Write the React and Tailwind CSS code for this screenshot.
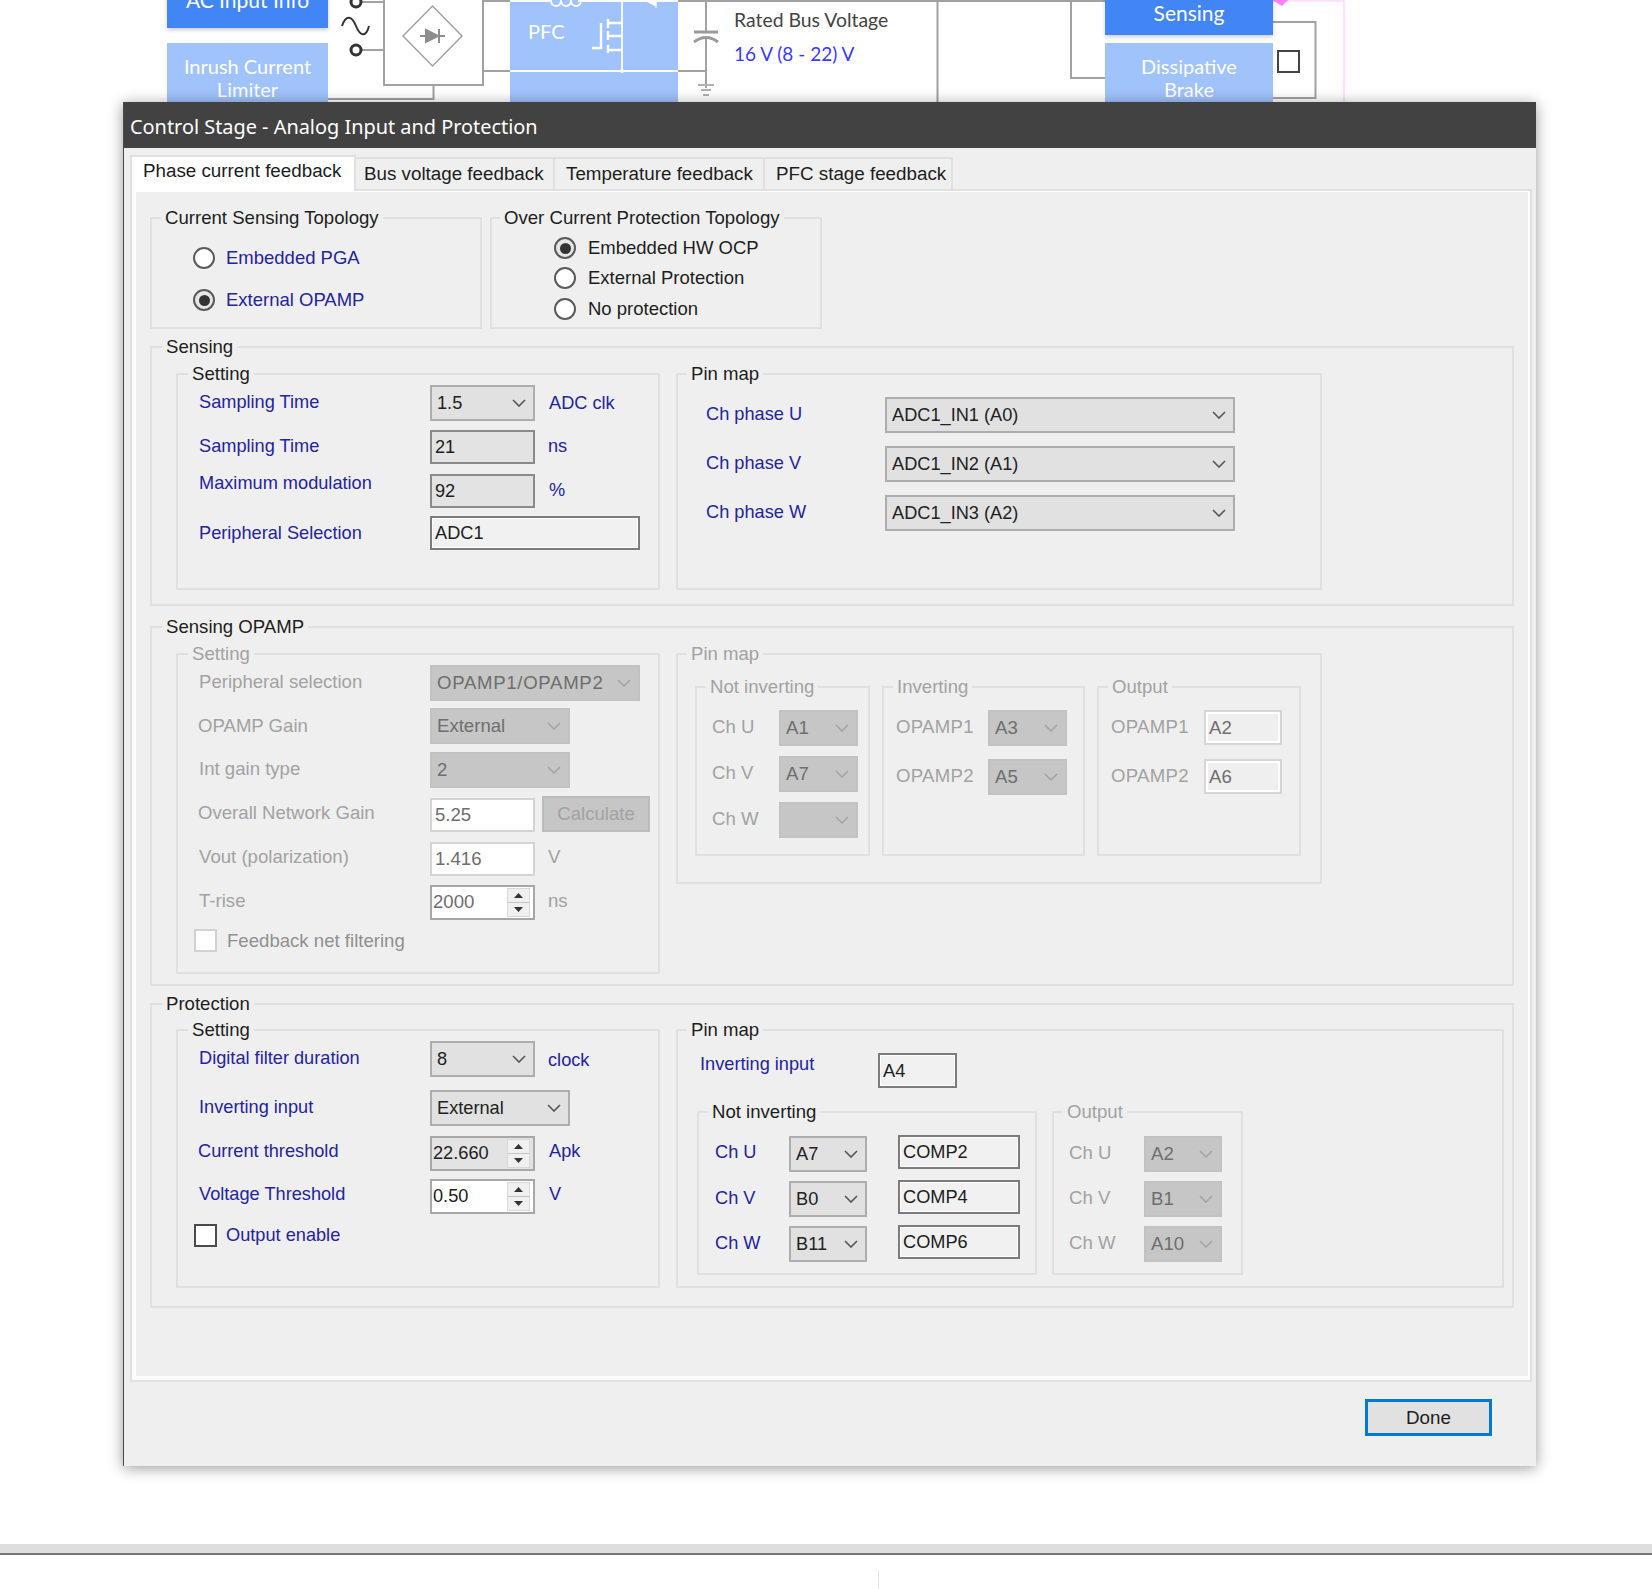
const BLUE = 'text-[#24249c]'
const GREY = 'text-[#a2a2a2] text-[18.6px]'
const INK = 'text-[#1d1d1d] text-[18.6px]'

function Chevron({ off }) {
  return (
    <svg width="14" height="8" viewBox="0 0 14 8" className="shrink-0">
      <polyline points="1,1 7,7 13,1" fill="none" stroke={off ? '#a4a4a4' : '#555555'} strokeWidth="1.6" />
    </svg>
  )
}

function Combo({ className = '', value, off }) {
  return (
    <div className={`box-border h-[36px] shrink-0 flex items-center justify-between border-2 pl-[5px] pr-[7px] ${off ? 'bg-[#c6c6c6] border-[#c2c2c2] text-[#6e6e6e]' : 'bg-[#e1e1e1] border-[#adadad] text-[#222222]'} ${className}`}>
      <span>{value}</span>
      <Chevron off={off} />
    </div>
  )
}

// text box, tone picks the look: plain, readonly, white, ghost
function Field({ className = '', value, tone = 'plain' }) {
  const look = {
    plain: 'bg-[#f1f1f1] border-[#7c7c7c] text-[#1d1d1d] shadow-[inset_0_0_0_1px_#ffffff]',
    readonly: 'bg-[#e3e3e3] border-[#8a8a8a] text-[#1d1d1d]',
    white: 'bg-white border-[#d4d4d4] text-[#6e6e6e]',
    ghost: 'bg-[#efefef] border-[#d6d6d6] text-[#6e6e6e] shadow-[inset_0_0_0_2px_#ffffff]',
  }[tone]
  return (
    <div className={`box-border h-[34px] shrink-0 flex items-center border-2 pl-[3px] ${look} ${className}`}>{value}</div>
  )
}

function Spin({ value, bg, border, text }) {
  return (
    <div className={`box-border w-[105px] h-[35px] shrink-0 flex items-center justify-between border-2 pl-[1px] pr-[3px] ${bg} ${border} ${text}`}>
      <span className="-mt-[2px]">{value}</span>
      <div className="w-[23px] h-[29px] flex flex-col bg-[#f0f0f0] border border-[#d8d8d8]">
        <div className="flex-1 flex items-center justify-center border-b border-[#c4c4c4]">
          <svg width="9" height="5" viewBox="0 0 9 5"><polygon points="4.5,0 9,5 0,5" fill="#333333" /></svg>
        </div>
        <div className="flex-1 flex items-center justify-center">
          <svg width="9" height="5" viewBox="0 0 9 5"><polygon points="0,0 9,0 4.5,5" fill="#333333" /></svg>
        </div>
      </div>
    </div>
  )
}

function Radio({ on }) {
  return (
    <span className={`box-border w-[22px] h-[22px] shrink-0 rounded-full border-2 border-[#5a5a5a] flex items-center justify-center ${on ? 'bg-[#e6e6e6]' : 'bg-white'}`}>
      {on && <span className="w-[11px] h-[11px] rounded-full bg-[#333333]" />}
    </span>
  )
}

function Group({ title, className = '', left = 'left-[9px]', off, children }) {
  return (
    <div className={`relative box-border border-2 border-[#e0e0e0] shrink-0 ${className}`}>
      <span className={`absolute top-[-13px] px-[4px] bg-[#efefef] whitespace-nowrap ${left} ${off ? GREY : INK}`}>{title}</span>
      {children}
    </div>
  )
}

function Row({ className = '', children }) {
  return <div className={`flex items-start ${className}`}>{children}</div>
}

function Txt({ className = '', children }) {
  return <span className={`shrink-0 whitespace-nowrap ${className}`}>{children}</span>
}

function Diagram() {
  return (
    <div className="absolute left-0 top-0 w-[1652px] h-[102px] overflow-hidden">
      <svg width="1652" height="102" viewBox="0 0 1652 102" className="absolute left-0 top-0">
        <g fill="none" stroke="#a2a2a2" strokeWidth="2">
          <rect x="384" y="-10" width="99" height="95" fill="#ffffff" />
          <path d="M362 2H384M362 50H384M433.5 85V99H328" />
          <path d="M483 1H510M483 71H510M677 1H1105M677 71H706M706 1V32M706 39V88" />
          <path d="M937.5 1V102M1071 1V78H1105M1272 22H1315.5V98H1272" />
          <path d="M432.5 6L462 36L432.5 66L403 36Z" strokeWidth="1.5" />
          <path d="M694 32H718" stroke="#9a9a9a" strokeWidth="3" />
          <path d="M694 42Q706 33 718 42" stroke="#9a9a9a" strokeWidth="3" />
          <path d="M698 85H714M701 90H711M703 95H709" stroke="#b0b0b0" />
        </g>
        <path d="M420 36H445M426 30L438 36L426 42ZM439 29V43" fill="#8d8d8d" stroke="#8d8d8d" strokeWidth="2" />
        <g fill="#ffffff" stroke="#333333" strokeWidth="3">
          <circle cx="356" cy="2" r="5" />
          <circle cx="356" cy="50" r="5" />
        </g>
        <path d="M342 26C346 14 352 16 356 26S366 38 369 26" fill="none" stroke="#333333" strokeWidth="2" />
        <path d="M1272 1H1344V102" fill="none" stroke="#ffc4ff" strokeWidth="1" />
        <path d="M1272 0H1288L1282 6Z" fill="#ff80ff" />
        <rect x="1278" y="51" width="21" height="21" fill="#ffffff" stroke="#444444" strokeWidth="2" />
        <path d="M1536 258A79 79 0 0 1 1536 348" fill="none" stroke="#cccccc" strokeWidth="1.5" />
      </svg>
      <div className="absolute left-[167px] top-[-28px] w-[161px] h-[56px] bg-[#4285f4] shadow-[0_2px_4px_rgba(0,0,0,0.2)] flex items-center justify-center text-white text-[21px] font-['Lato',sans-serif]">AC Input Info</div>
      <div className="absolute left-[167px] top-[43px] w-[161px] h-[70px] pt-[12px] bg-[#a0c3fb] text-center text-white text-[20px] leading-[23px] font-['Lato',sans-serif]">Inrush Current<br />Limiter</div>
      <div className="absolute left-[510px] top-0 w-[168px] h-[102px] bg-[#a0c3fb]">
        <svg width="168" height="102" viewBox="0 0 168 102" className="absolute left-0 top-0">
          <g fill="none" stroke="#ffffff" strokeWidth="1.8">
            <path d="M0 1H40M68 1H168M0 71H168M112 1V71" />
            <path d="M41 0Q41 6 46 6T51 0M51 0Q51 6 56 6T61 0M61 0Q61 6 66 6T71 0" />
            <path d="M91 23V48H82M98 19V28M98 31V40M98 45V53M98 23H112M98 36H112M98 50H112" strokeWidth="2.4" />
          </g>
          <path d="M134 0L146 6V0ZM146 0V8" fill="#ffffff" stroke="#ffffff" />
          <circle cx="112" cy="71" r="2" fill="#ffffff" />
        </svg>
        <span className="absolute left-[18px] top-[18px] text-white text-[20px] leading-[26px] font-['Lato',sans-serif]">PFC</span>
      </div>
      <span className="absolute left-[734px] top-[8px] text-[#444444] text-[19.4px] leading-[24px] font-['Lato',sans-serif]">Rated Bus Voltage</span>
      <span className="absolute left-[734px] top-[42px] text-[#3b3bf5] text-[19px] leading-[24px] font-['Lato',sans-serif]">16 V (8 - 22) V</span>
      <div className="absolute left-[1105px] top-[-9px] w-[168px] h-[44px] bg-[#4285f4] shadow-[0_2px_4px_rgba(0,0,0,0.2)] flex items-center justify-center text-white text-[21px] font-['Lato',sans-serif]">Sensing</div>
      <div className="absolute left-[1105px] top-[43px] w-[168px] h-[70px] pt-[12px] bg-[#a0c3fb] text-center text-white text-[20px] leading-[23px] font-['Lato',sans-serif]">Dissipative<br />Brake</div>
    </div>
  )
}

function Tabs() {
  return (
    <div className="relative z-10 flex items-end h-[41px] pl-[6px] text-[#1d1d1d] text-[18.8px]">
      <div className="box-border w-[226px] h-[36px] -mb-[2px] bg-white border-2 border-b-0 border-[#e0e0e0] pl-[11px] pt-[2px]">Phase current feedback</div>
      <div className="box-border w-[199px] h-[32px] border-t-2 border-r-2 border-[#e0e0e0] pl-[8px] pt-[3px]">Bus voltage feedback</div>
      <div className="box-border w-[210px] h-[32px] border-t-2 border-r-2 border-[#e0e0e0] pl-[11px] pt-[3px]">Temperature feedback</div>
      <div className="box-border w-[188px] h-[32px] border-t-2 border-r-2 border-[#e0e0e0] pl-[11px] pt-[3px]">PFC stage feedback</div>
    </div>
  )
}

function TopRow() {
  return (
    <div className="flex gap-[8px] text-[18.5px]">
      <Group title="Current Sensing Topology" className="w-[332px] h-[112px]">
        <div className="flex flex-col gap-[18px] pl-[41px] pt-[27px] text-[#24249c]">
          <div className="flex items-center gap-[11px]"><Radio />Embedded PGA</div>
          <div className="flex items-center gap-[11px]"><Radio on />External OPAMP</div>
        </div>
      </Group>
      <Group title="Over Current Protection Topology" left="left-[8px]" className="w-[332px] h-[112px]">
        <div className="flex flex-col gap-[6px] pl-[62px] pt-[17px] text-[#1d1d1d]">
          <div className="flex items-center gap-[12px]"><Radio on />Embedded HW OCP</div>
          <div className="flex items-center gap-[12px]"><Radio />External Protection</div>
          <div className="flex items-center gap-[12px] mt-[1px]"><Radio />No protection</div>
        </div>
      </Group>
    </div>
  )
}

function SensingGroup() {
  return (
    <Group title="Sensing" left="left-[10px]" className="w-[1364px] h-[260px] mt-[17px]">
      <div className="flex gap-[16px] pl-[24px] pt-[25px]">
        <Group title="Setting" left="left-[10px]" className="w-[484px] h-[217px]">
          <div className={`pl-[21px] pt-[10px] ${BLUE}`}>
            <Row>
              <Txt className="w-[231px] mt-[5px]">Sampling Time</Txt>
              <Combo className="w-[105px]" value="1.5" />
              <Txt className="ml-[14px] mt-[6px]">ADC clk</Txt>
            </Row>
            <Row className="mt-[9px]">
              <Txt className="w-[231px] mt-[4px]">Sampling Time</Txt>
              <Field className="w-[105px]" value="21" tone="readonly" />
              <Txt className="ml-[13px] mt-[4px]">ns</Txt>
            </Row>
            <Row className="mt-[10px]">
              <Txt className="w-[231px] -mt-[3px]">Maximum modulation</Txt>
              <Field className="w-[105px]" value="92" tone="readonly" />
              <Txt className="ml-[14px] mt-[4px]">%</Txt>
            </Row>
            <Row className="mt-[8px]">
              <Txt className="w-[231px] mt-[5px]">Peripheral Selection</Txt>
              <Field className="w-[210px]" value="ADC1" />
            </Row>
          </div>
        </Group>
        <Group title="Pin map" className="w-[646px] h-[217px]">
          <div className={`pl-[28px] pt-[22px] flex flex-col gap-[13px] ${BLUE}`}>
            <Row>
              <Txt className="w-[179px] mt-[5px]">Ch phase U</Txt>
              <Combo className="w-[350px]" value="ADC1_IN1 (A0)" />
            </Row>
            <Row>
              <Txt className="w-[179px] mt-[5px]">Ch phase V</Txt>
              <Combo className="w-[350px]" value="ADC1_IN2 (A1)" />
            </Row>
            <Row>
              <Txt className="w-[179px] mt-[5px]">Ch phase W</Txt>
              <Combo className="w-[350px]" value="ADC1_IN3 (A2)" />
            </Row>
          </div>
        </Group>
      </div>
    </Group>
  )
}

function OpampGroup() {
  return (
    <Group title="Sensing OPAMP" left="left-[10px]" className="w-[1364px] h-[360px] mt-[20px]">
      <div className="flex items-start gap-[16px] pl-[24px] pt-[25px]">
        <Group title="Setting" off left="left-[10px]" className="w-[484px] h-[321px]">
          <div className={`pl-[21px] pt-[10px] ${GREY}`}>
            <Row>
              <Txt className="w-[231px] mt-[5px]">Peripheral selection</Txt>
              <Combo off className="w-[210px]" value={<span className="tracking-[0.7px]">OPAMP1/OPAMP2</span>} />
            </Row>
            <Row className="mt-[7px]">
              <Txt className="w-[232px] mt-[6px] -ml-[1px]">OPAMP Gain</Txt>
              <Combo off className="w-[140px]" value="External" />
            </Row>
            <Row className="mt-[8px]">
              <Txt className="w-[231px] mt-[5px]">Int gain type</Txt>
              <Combo off className="w-[140px]" value="2" />
            </Row>
            <Row className="mt-[8px]">
              <Txt className="w-[232px] mt-[5px] -ml-[1px]">Overall Network Gain</Txt>
              <Field tone="white" className="w-[105px] mt-[2px]" value="5.25" />
              <div className="box-border w-[108px] h-[36px] ml-[7px] bg-[#c6c6c6] border-2 border-[#bcbcbc] flex items-center justify-center">Calculate</div>
            </Row>
            <Row className="mt-[10px]">
              <Txt className="w-[231px] mt-[3px]">Vout (polarization)</Txt>
              <Field tone="white" className="w-[105px]" value="1.416" />
              <Txt className="ml-[13px] mt-[3px]">V</Txt>
            </Row>
            <Row className="mt-[9px]">
              <Txt className="w-[231px] mt-[4px]">T-rise</Txt>
              <Spin value="2000" bg="bg-white" border="border-[#a6a6a6]" text="text-[#6e6e6e]" />
              <Txt className="ml-[13px] mt-[4px]">ns</Txt>
            </Row>
            <Row className="mt-[9px] -ml-[5px] items-center">
              <span className="box-border w-[23px] h-[23px] border-2 border-[#d2d2d2] bg-white" />
              <span className="ml-[10px] text-[#8f8f8f]">Feedback net filtering</span>
            </Row>
          </div>
        </Group>
        <Group title="Pin map" off className="w-[646px] h-[231px]">
          <div className="flex gap-[12px] pl-[17px] pt-[31px]">
            <Group title="Not inverting" off className="w-[175px] h-[170px]">
              <div className={`pl-[15px] pt-[22px] flex flex-col gap-[10px] ${GREY}`}>
                <Row><Txt className="w-[67px] mt-[5px]">Ch U</Txt><Combo off className="w-[79px]" value="A1" /></Row>
                <Row><Txt className="w-[67px] mt-[5px]">Ch V</Txt><Combo off className="w-[79px]" value="A7" /></Row>
                <Row><Txt className="w-[67px] mt-[5px]">Ch W</Txt><Combo off className="w-[79px]" value="" /></Row>
              </div>
            </Group>
            <Group title="Inverting" off className="w-[203px] h-[170px]">
              <div className={`pl-[12px] pt-[22px] flex flex-col gap-[13px] ${GREY}`}>
                <Row><Txt className="w-[92px] mt-[5px] tracking-[0.3px]">OPAMP1</Txt><Combo off className="w-[79px]" value="A3" /></Row>
                <Row><Txt className="w-[92px] mt-[5px] tracking-[0.3px]">OPAMP2</Txt><Combo off className="w-[79px]" value="A5" /></Row>
              </div>
            </Group>
            <Group title="Output" off className="w-[204px] h-[170px]">
              <div className={`pl-[12px] pt-[22px] flex flex-col gap-[14px] ${GREY}`}>
                <Row><Txt className="w-[93px] mt-[5px] tracking-[0.3px]">OPAMP1</Txt><Field tone="ghost" className="w-[78px] h-[35px]" value="A2" /></Row>
                <Row><Txt className="w-[93px] mt-[5px] tracking-[0.3px]">OPAMP2</Txt><Field tone="ghost" className="w-[78px] h-[35px]" value="A6" /></Row>
              </div>
            </Group>
          </div>
        </Group>
      </div>
    </Group>
  )
}

function ProtectionGroup() {
  return (
    <Group title="Protection" left="left-[10px]" className="w-[1364px] h-[305px] mt-[17px]">
      <div className="flex gap-[16px] pl-[24px] pt-[24px]">
        <Group title="Setting" left="left-[10px]" className="w-[484px] h-[259px]">
          <div className={`pl-[21px] pt-[10px] ${BLUE}`}>
            <Row>
              <Txt className="w-[231px] mt-[5px]">Digital filter duration</Txt>
              <Combo className="w-[105px]" value="8" />
              <Txt className="ml-[13px] mt-[7px]">clock</Txt>
            </Row>
            <Row className="mt-[13px]">
              <Txt className="w-[231px] mt-[5px]">Inverting input</Txt>
              <Combo className="w-[140px]" value="External" />
            </Row>
            <Row className="mt-[10px]">
              <Txt className="w-[231px] mt-[3px] -ml-[1px] mr-[1px]">Current threshold</Txt>
              <Spin value="22.660" bg="bg-[#e3e3e3]" border="border-[#a8a8a8]" text="text-[#222222]" />
              <Txt className="ml-[14px] mt-[3px]">Apk</Txt>
            </Row>
            <Row className="mt-[8px]">
              <Txt className="w-[231px] mt-[3px]">Voltage Threshold</Txt>
              <Spin value="0.50" bg="bg-white" border="border-[#a8a8a8]" text="text-[#222222]" />
              <Txt className="ml-[14px] mt-[3px]">V</Txt>
            </Row>
            <Row className="mt-[10px] -ml-[5px] items-center">
              <span className="box-border w-[23px] h-[23px] border-2 border-[#4a4a4a] bg-white" />
              <span className="ml-[9px] -mt-[1px]">Output enable</span>
            </Row>
          </div>
        </Group>
        <Group title="Pin map" className="w-[828px] h-[259px]">
          <div className="pl-[22px] pt-[22px]">
            <Row>
              <Txt className={`w-[178px] -mt-[1px] ${BLUE}`}>Inverting input</Txt>
              <Field className="w-[79px] h-[35px]" value="A4" />
            </Row>
            <div className="flex gap-[15px] -ml-[3px] mt-[23px]">
              <Group title="Not inverting" className="w-[340px] h-[164px]">
                <div className="pl-[16px] pt-[23px] flex flex-col gap-[9px]">
                  <Row>
                    <Txt className={`w-[74px] mt-[4px] ${BLUE}`}>Ch U</Txt>
                    <Combo className="w-[78px]" value="A7" />
                    <Field className="w-[122px] ml-[31px] -mt-[1px]" value="COMP2" />
                  </Row>
                  <Row>
                    <Txt className={`w-[74px] mt-[5px] ${BLUE}`}>Ch V</Txt>
                    <Combo className="w-[78px]" value="B0" />
                    <Field className="w-[122px] ml-[31px] -mt-[1px]" value="COMP4" />
                  </Row>
                  <Row>
                    <Txt className={`w-[74px] mt-[5px] ${BLUE}`}>Ch W</Txt>
                    <Combo className="w-[78px]" value="B11" />
                    <Field className="w-[122px] ml-[31px] -mt-[1px]" value="COMP6" />
                  </Row>
                </div>
              </Group>
              <Group title="Output" off className="w-[191px] h-[164px]">
                <div className={`pl-[15px] pt-[23px] flex flex-col gap-[9px] ${GREY}`}>
                  <Row><Txt className="w-[75px] mt-[5px]">Ch U</Txt><Combo off className="w-[78px]" value="A2" /></Row>
                  <Row><Txt className="w-[75px] mt-[5px]">Ch V</Txt><Combo off className="w-[78px]" value="B1" /></Row>
                  <Row><Txt className="w-[75px] mt-[5px]">Ch W</Txt><Combo off className="w-[78px]" value="A10" /></Row>
                </div>
              </Group>
            </div>
          </div>
        </Group>
      </div>
    </Group>
  )
}

export default function App() {
  return (
    <div className="relative w-[1652px] h-[1589px] overflow-hidden bg-white text-[18.2px] leading-[24px] font-['Liberation_Sans',Arial,sans-serif]">
      <Diagram />
      <div className="relative ml-[123px] pt-[102px]">
        <div className="box-border w-[1413px] h-[1364px] bg-[#efefef] border-l border-[#4a4a4a] shadow-[0_2px_14px_rgba(0,0,0,0.4)]">
          <div className="h-[46px] bg-[#424242] pl-[6px] pt-[3px] flex items-center text-white text-[19.9px] font-['Noto_Sans',sans-serif]">Control Stage - Analog Input and Protection</div>
          <Tabs />
          <div className="box-border ml-[6px] w-[1402px] h-[1193px] border-2 border-[#e0e0e0]">
            <div className="box-border h-full border-l-4 border-r-2 border-b-4 border-t border-white pl-[14px] pt-[25px]">
              <TopRow />
              <SensingGroup />
              <OpampGroup />
              <ProtectionGroup />
            </div>
          </div>
          <div className="flex justify-end pr-[44px] pt-[17px]">
            <button className="box-border w-[127px] h-[37px] bg-[#e1e1e1] border-[3px] border-[#0078d7] text-[#1d1d1d] text-[18.8px]">Done</button>
          </div>
        </div>
      </div>
      <div className="mt-[78px] h-[11px] bg-[#dedede] border-b-2 border-[#777777]" />
      <div className="ml-[878px] mt-[15px] w-px h-[19px] bg-[#e4e4e4]" />
    </div>
  )
}
